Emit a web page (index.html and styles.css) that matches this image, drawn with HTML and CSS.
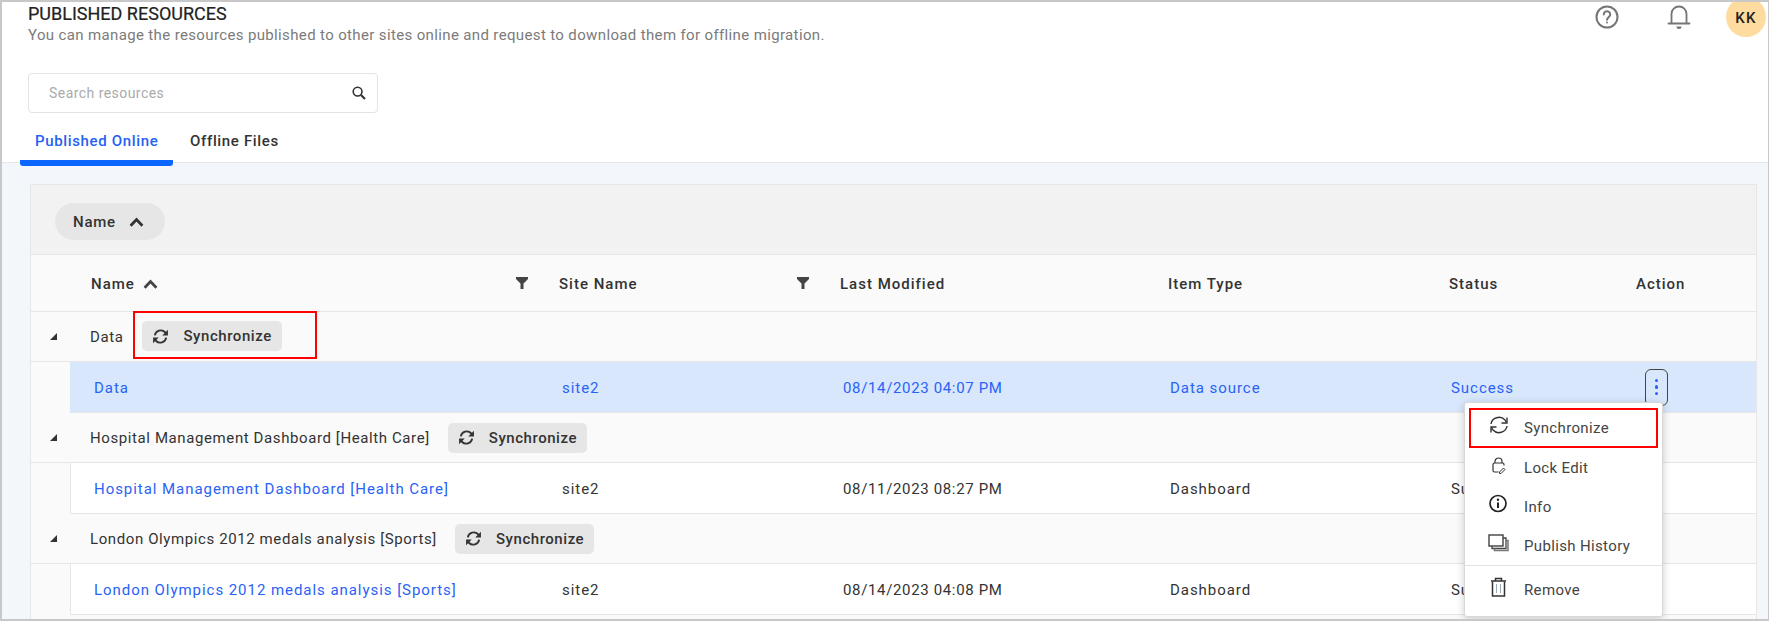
FILE: index.html
```html
<!DOCTYPE html>
<html lang="en">
<head>
<meta charset="utf-8">
<title>Published Resources</title>
<link rel="stylesheet" href="styles.css">
</head>
<body>
<div class="frame">
  <header class="top">
    <div class="title-row">
      <div>
        <h1 class="title">PUBLISHED RESOURCES</h1>
        <p class="subtitle">You can manage the resources published to other sites online and request to download them for offline migration.</p>
      </div>
      <div class="top-icons">
        <svg class="ic-help" width="26" height="26" viewBox="0 0 26 26" fill="none" stroke="#757575" stroke-width="2"><circle cx="13" cy="13" r="10.5"/><path d="M9.8 10.4a3.2 3.2 0 1 1 5 2.7c-1.1.8-1.8 1.3-1.8 2.6" stroke-linecap="round"/><circle cx="13" cy="18.6" r="1" fill="#757575" stroke="none"/></svg>
        <svg class="ic-bell" width="26" height="28" viewBox="0 0 26 28" fill="none" stroke="#757575" stroke-width="1.8"><path d="M5.5 20V11a7.5 7.5 0 0 1 15 0v9"/><path d="M2.5 20.5h21" stroke-linecap="round"/><path d="M10.5 23.5h5a2.5 2.5 0 0 1-5 0z" fill="#757575" stroke="none"/></svg>
        <div class="avatar">KK</div>
      </div>
    </div>
    <div class="search">
      <span class="search-text">Search resources</span>
      <svg width="16" height="16" viewBox="0 0 16 16" fill="none" stroke="#333" stroke-width="1.6"><circle cx="6.6" cy="6.6" r="4.4"/><path d="M10 10l4 4" stroke-width="2.2"/></svg>
    </div>
    <nav class="tabs">
      <div class="tab active">Published Online</div>
      <div class="tab">Offline Files</div>
    </nav>
  </header>
  <main class="content">
    <section class="grid">
      <div class="groupbar"><span class="chip">Name <svg width="15" height="10" viewBox="0 0 14 9" fill="none" stroke="#333" stroke-width="2.6"><path d="M1.5 8L7 2.2 12.500 8"/></svg></span></div>
      <div class="head cols">
        <div class="hcell name">Name <svg width="15" height="10" viewBox="0 0 14 9" fill="none" stroke="#444" stroke-width="2.6"><path d="M1.500 8L7 2.200 12.500 8"/></svg>
          <svg class="filter" width="12" height="12" viewBox="0 0 12 12"><path d="M0 0h12v2L7.500 6.500V12h-3V6.500L0 2z" fill="#444"/></svg></div>
        <div class="hcell site">Site Name
          <svg class="filter" width="12" height="12" viewBox="0 0 12 12"><path d="M0 0h12v2L7.500 6.500V12h-3V6.500L0 2z" fill="#444"/></svg></div>
        <div class="hcell">Last Modified</div>
        <div class="hcell">Item Type</div>
        <div class="hcell">Status</div>
        <div class="hcell">Action</div>
      </div>

      <div class="group">
        <span class="tri"></span><span class="gname first">Data</span>
        <span class="syncwrap"><button class="sync"><svg class="i-sync" width="17" height="17" viewBox="0 0 24 24"><use href="#sync"/></svg>Synchronize</button></span>
      </div>
      <div class="row cols selected">
        <div class="link">Data</div><div class="link">site2</div><div class="link date">08/14/2023 04:07 PM</div><div class="link">Data source</div><div class="link">Success</div>
        <div class="act-cell"><span class="kebab"><i></i><i></i><i></i></span></div>
      </div>

      <div class="group">
        <span class="tri"></span><span class="gname">Hospital Management Dashboard [Health Care]</span>
        <button class="sync"><svg class="i-sync" width="17" height="17" viewBox="0 0 24 24"><use href="#sync"/></svg>Synchronize</button>
      </div>
      <div class="row cols">
        <div class="link">Hospital Management Dashboard [Health Care]</div><div>site2</div><div class="date">08/11/2023 08:27 PM</div><div>Dashboard</div><div>Success</div><div></div>
      </div>

      <div class="group">
        <span class="tri"></span><span class="gname">London Olympics 2012 medals analysis [Sports]</span>
        <button class="sync"><svg class="i-sync" width="17" height="17" viewBox="0 0 24 24"><use href="#sync"/></svg>Synchronize</button>
      </div>
      <div class="row cols">
        <div class="link">London Olympics 2012 medals analysis [Sports]</div><div>site2</div><div class="date">08/14/2023 04:08 PM</div><div>Dashboard</div><div>Success</div><div></div>
      </div>
    </section>
  </main>

  <ul class="menu">
    <li class="mi marked-item"><svg width="22" height="20" viewBox="0 0 22 20" fill="none" stroke="#333" stroke-width="1.4"><path d="M3 9a8 7.500 0 0 1 14-4l1.500 2.500M19 11a8 7.500 0 0 1-14 4L3.500 12.500"/><path d="M19 2.500V8h-5.500M3 17.500V12h5.500"/></svg><span>Synchronize</span></li>
    <li class="mi"><svg width="22" height="20" viewBox="0 0 22 20" fill="none" stroke="#333" stroke-width="1.2"><path d="M7 8V6.500a3.500 3.500 0 0 1 7 0V8"/><path d="M10.500 17H6.500A1.500 1.500 0 0 1 5 15.500v-6A1.500 1.500 0 0 1 6.500 8h8A1.500 1.500 0 0 1 16 9.500v1"/><path d="M11.500 17l4-4 1.500 1.500-4 4h-1.500z" stroke-width="1"/></svg><span>Lock Edit</span></li>
    <li class="mi"><svg width="22" height="20" viewBox="0 0 22 20" fill="none" stroke="#222" stroke-width="1.7"><circle cx="10" cy="9.500" r="8"/><path d="M10 8.500v5.500" stroke-width="2"/><circle cx="10" cy="5.800" r="1.200" fill="#222" stroke="none"/></svg><span>Info</span></li>
    <li class="mi"><svg width="22" height="20" viewBox="0 0 22 20" fill="none" stroke="#333" stroke-width="1.300"><rect x="1" y="2" width="14" height="11" fill="#fff"/><path d="M15 5h3v10.500H4V13" stroke="#444"/><path d="M18 7.500h2v10H6.500v-2" stroke="#777" stroke-width="1.500"/></svg><span>Publish History</span></li>
    <li class="mi remove"><svg width="22" height="22" viewBox="0 0 22 22" fill="none" stroke="#333" stroke-width="1.500"><path d="M3 5h15M7.500 5V2.500h6V5" /><path d="M4.500 5.500V20h12V5.500"/><path d="M8.500 8v9M12.500 8v9" stroke="#9ab" stroke-width="1"/></svg><span>Remove</span></li>
  </ul>
</div>

<svg class="defs" width="0" height="0">
  <symbol id="sync" viewBox="0 0 24 24">
    <path d="M4 10.500A8.500 8.500 0 0 1 18.500 6l1.500 2M20 13.500A8.500 8.500 0 0 1 5.500 18L4 16" fill="none" stroke="#333" stroke-width="2.600"/>
    <path d="M22.500 2.500v8h-8zM1.500 21.500v-8h8z" fill="#333"/>
  </symbol>
</svg>
</body>
</html>
```

FILE: styles.css
```css
* { box-sizing: border-box; }
html, body { margin: 0; padding: 0; height: 100%; overflow: hidden; }
body { font-family: Roboto, "Liberation Sans", sans-serif; color: #333; font-size: 15px; }
svg { display: block; flex: none; }
.defs { position: absolute; }

.frame {
  position: relative;
  width: 1769px; height: 621px;
  border: 1px solid #c8c8c8;
  border-bottom-width: 2px;
  border-left-width: 2px;
  border-top-width: 2px;
  background: #f3f6fa;
  overflow: hidden;
  display: flex; flex-direction: column;
}

.top { background: #fff; height: 161px; border-bottom: 1px solid #e4e6e9; flex: none; position: relative; }
.title-row { display: flex; justify-content: space-between; padding-left: 26px; height: 71px; }
.title { margin: 1px 0 0; font-size: 18px; line-height: 22px; font-weight: 400; color: #222; -webkit-text-stroke: .2px #222; }
.subtitle { margin: 1px 0 0; font-size: 15px; line-height: 18px; color: #7b7b7b; letter-spacing: .36px; }
.top-icons { display: flex; align-items: flex-start; }
.ic-help { margin: 2px 0 0; }
.ic-bell { margin: 1px 0 0 46px; }
.avatar {
  width: 40px; height: 40px; margin: -5px 2px 0 34px; border-radius: 50%;
  background: #fedc9f; color: #222; font-size: 15px; font-weight: 500; letter-spacing: 1.2px;
  display: flex; align-items: center; justify-content: center; padding-top: 1px;
}

.search {
  margin-left: 26px; width: 350px; height: 40px;
  border: 1px solid #e3e3e3; border-radius: 4px;
  display: flex; align-items: center; justify-content: space-between;
  padding: 0 10px 0 20px;
}
.search-text { color: #aaa; font-size: 14px; letter-spacing: .45px; }

.tabs { display: flex; position: absolute; left: 18px; bottom: -4px; height: 42px; }
.tab { font-size: 15px; font-weight: 500; letter-spacing: .65px; color: #333; padding: 7px 18px 0 0; line-height: 20px; white-space: nowrap; }
.tab.active {
  width: 153px; color: #1f62f5; padding-left: 15px; height: 42px; border-bottom: 6px solid #0a66ff; border-radius: 0 0 3px 3px; margin-right: 17px;
}

.content { flex: 1; padding: 21px 11px 0 28px; }
.grid { border: 1px solid #e6e6e6; border-bottom: 0; background: #fafafa; height: 460px; overflow: hidden; }
.groupbar { height: 70px; background: #f2f2f2; border-bottom: 1px solid #e6e6e6; padding: 18px 0 0 24px; }
.chip {
  display: inline-flex; align-items: center; gap: 13px; height: 37px; padding: 0 21px 0 18px;
  background: #e6e6e6; border-radius: 19px; font-size: 15px; font-weight: 500; letter-spacing: .75px; color: #333;
}

.cols { display: grid; grid-template-columns: 468px 281px 327px 281px 188px 1fr; }
.head { height: 57px; border-bottom: 1px solid #e6e6e6; padding: 2px 0 0 60px; align-items: center; background: #fafafa; }
.head.cols { grid-template-columns: 468px 281px 328px 281px 187px 1fr; }
.hcell { display: flex; align-items: center; gap: 8px; font-size: 15px; font-weight: 500; letter-spacing: 1px; color: #333; padding-right: 31px; }
.hcell .filter { margin-left: auto; margin-top: -2px; }

.group { height: 50px; display: flex; align-items: center; padding-left: 19px; border-bottom: 1px solid #e6e6e6; font-size: 15px; letter-spacing: .6px; color: #333; }
.tri { width: 0; height: 0; border-style: solid; border-width: 0 0 7px 7px; border-color: transparent transparent #333 transparent; margin-right: 33px; }
.gname { margin-right: 18px; }
.gname.first { margin-right: 10px; }
.sync {
  display: inline-flex; align-items: center; gap: 14px; height: 30px; padding: 0 10px;
  font: 500 15px Roboto, sans-serif; letter-spacing: .55px; color: #333;
  background: #e6e6e6; border: 0; border-radius: 5px;
}
.syncwrap { border: 2px solid #f00; height: 48px; padding: 8px 33px 0 7px; margin-top: -3px; display: flex; align-items: flex-start; }

.row { height: 51px; margin-left: 39px; padding: 2px 0 0 23px; align-items: center; background: #fff; border-left: 1px solid #e6e6e6; border-bottom: 1px solid #e6e6e6; font-size: 15px; letter-spacing: .95px; color: #333; }
.row.selected { background: #d8e7fc; border-left-color: #d8e7fc; }
.date { letter-spacing: .65px; }
.link { color: #2a62f6; }
.act-cell { padding-left: 6px; margin-top: -2px; }
.kebab {
  display: flex; flex-direction: column; align-items: center; justify-content: center; gap: 3px;
  width: 23px; height: 37px; border: 1px solid #444; border-radius: 6px;
}
.kebab i { width: 3.500px; height: 3.500px; background: #2a62f6; border-radius: 50%; }

.menu {
  position: absolute; left: 1462px; top: 400px; width: 199px; height: 215px;
  margin: 0; padding: 5px 0 0; list-style: none;
  background: #fff; border: 1px solid #d8d8d8; border-radius: 3px; box-shadow: 0 2px 8px rgba(0,0,0,.2);
}
.mi { display: flex; align-items: center; gap: 14px; height: 39px; padding-left: 23px; font-size: 15px; letter-spacing: .35px; color: #444; }
.mi svg { position: relative; top: -3px; }
.marked-item { height: 40px; margin: 0 4px; padding-left: 17px; border: 2px solid #f00; }
.remove { border-top: 1px solid #e3e3e3; height: 48px; }
```
